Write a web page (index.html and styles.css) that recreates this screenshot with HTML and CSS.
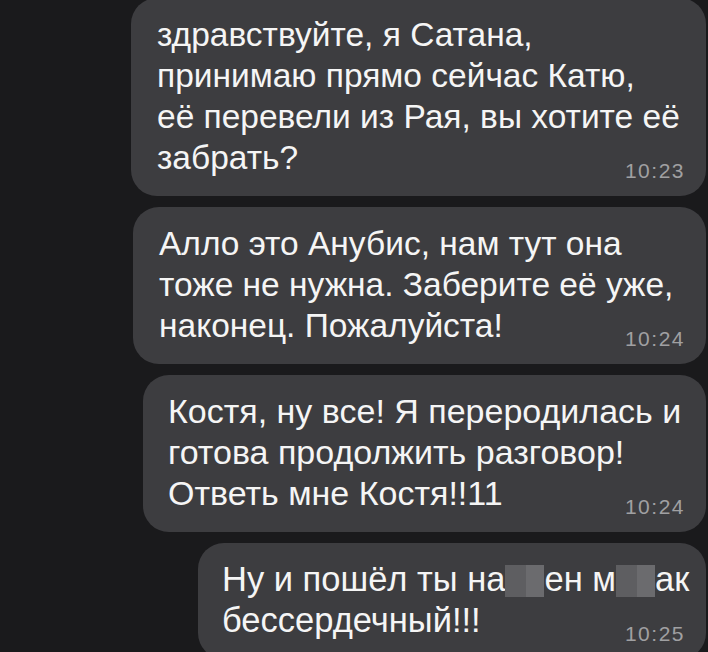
FILE: index.html
```html
<!DOCTYPE html>
<html lang="ru">
<head>
<meta charset="utf-8">
<title>Чат</title>
<link rel="stylesheet" href="styles.css">
</head>
<body>
<main class="chat">
  <div class="bubble b1">
    <div class="line">здравствуйте, я Сатана,</div>
    <div class="line">принимаю прямо сейчас Катю,</div>
    <div class="line">её перевели из Рая, вы хотите её</div>
    <div class="line last"><span>забрать?</span><span class="time">10:23</span></div>
  </div>
  <div class="bubble b2">
    <div class="line">Алло это Анубис, нам тут она</div>
    <div class="line">тоже не нужна. Заберите её уже,</div>
    <div class="line last"><span>наконец. Пожалуйста!</span><span class="time">10:24</span></div>
  </div>
  <div class="bubble b3">
    <div class="line">Костя, ну все! Я переродилась и</div>
    <div class="line">готова продолжить разговор!</div>
    <div class="line last"><span>Ответь мне Костя!!11</span><span class="time">10:24</span></div>
  </div>
  <div class="bubble b4">
    <div class="line">Ну и пошёл ты на<span class="censor"></span>ен м<span class="censor"></span>ак</div>
    <div class="line last"><span>бессердечный!!!</span><span class="time">10:25</span></div>
  </div>
</main>
</body>
</html>
```

FILE: styles.css
```css
html, body {
  margin: 0;
  padding: 0;
  background: #1a1a1c;
  height: 100%;
  overflow: hidden;
}

.chat {
  display: flex;
  flex-direction: column;
  align-items: flex-end;
  gap: 11px;
  padding-right: 2px;
  margin-top: -2px;
  font-family: "Liberation Sans", "Roboto", sans-serif;
}

.bubble {
  box-sizing: border-box;
  background: #3d3d40;
  border-radius: 26px;
  padding: 16px 22px 18px 26px;
  color: #f5f5f5;
  font-size: 33.5px;
  line-height: 41px;
  white-space: nowrap;
}

.b1 { width: 575px; }
.b2 { width: 573px; }
.b3 { width: 563px; padding-left: 25px; font-size: 34px; }
.b4 { width: 508px; padding-left: 24px; font-size: 34.5px; }

.line.last {
  display: flex;
  justify-content: space-between;
  align-items: flex-end;
}

.time {
  font-size: 21px;
  line-height: 20px;
  letter-spacing: 1.5px;
  color: #a0a0a2;
  margin-bottom: -3px;
  margin-right: -1px;
}

.censor {
  display: inline-block;
  width: 39px;
  height: 32px;
  vertical-align: -6px;
  background: linear-gradient(90deg, #5e5e61 0 55%, #6b6b6e 55% 100%);
}
```
